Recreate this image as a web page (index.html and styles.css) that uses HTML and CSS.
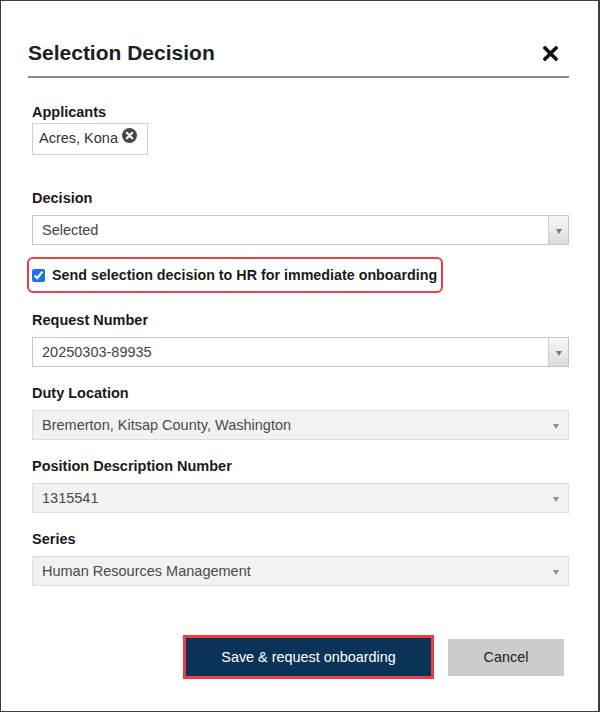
FILE: index.html
```html
<!DOCTYPE html>
<html lang="en">
<head>
<meta charset="utf-8">
<title>Selection Decision</title>
<link rel="stylesheet" href="styles.css">
</head>
<body>
<div class="modal">
  <div class="header">
    <h1 class="title">Selection Decision</h1>
    <button class="close" type="button" aria-label="Close">
      <svg width="15" height="15" viewBox="0 0 15 15"><path d="M2 2 L13 13 M13 2 L2 13" stroke="#111" stroke-width="3.6" stroke-linecap="square" fill="none"/></svg>
    </button>
  </div>
  <div class="body">
    <div class="field field-applicants">
      <div class="label label-tight">Applicants</div>
      <div class="chip">
        <span class="chip-text">Acres, Kona</span>
        <svg class="chip-x" width="15" height="15" viewBox="0 0 15 15"><circle cx="7.5" cy="7.5" r="7.5" fill="#474747"/><path d="M4.8 4.8 L10.2 10.2 M10.2 4.8 L4.8 10.2" stroke="#fff" stroke-width="2.2" stroke-linecap="round"/></svg>
      </div>
    </div>
    <div class="field field-decision">
      <div class="label">Decision</div>
      <div class="select">
        <span class="value">Selected</span>
        <span class="arrow"><i class="tri"></i></span>
      </div>
    </div>
    <label class="check">
      <input type="checkbox" class="check-box" checked>
      <span class="check-text">Send selection decision to HR for immediate onboarding</span>
    </label>
    <div class="field field-request">
      <div class="label">Request Number</div>
      <div class="select">
        <span class="value">20250303-89935</span>
        <span class="arrow"><i class="tri"></i></span>
      </div>
    </div>
    <div class="field">
      <div class="label">Duty Location</div>
      <div class="select select-disabled">
        <span class="value">Bremerton, Kitsap County, Washington</span>
        <span class="arrow"><i class="tri"></i></span>
      </div>
    </div>
    <div class="field">
      <div class="label">Position Description Number</div>
      <div class="select select-disabled">
        <span class="value">1315541</span>
        <span class="arrow"><i class="tri"></i></span>
      </div>
    </div>
    <div class="field">
      <div class="label">Series</div>
      <div class="select select-disabled">
        <span class="value">Human Resources Management</span>
        <span class="arrow"><i class="tri"></i></span>
      </div>
    </div>
    <div class="actions">
      <button class="btn btn-primary" type="button">Save &amp; request onboarding</button>
      <button class="btn btn-cancel" type="button">Cancel</button>
    </div>
  </div>
</div>
</body>
</html>
```
FILE: styles.css
```css
* { box-sizing: border-box; }
html, body { margin: 0; padding: 0; background: #fff; }
body {
  font-family: "Liberation Sans", Arial, Helvetica, sans-serif;
  color: #1c1c1c;
}
.modal {
  width: 600px;
  height: 712px;
  border: 1px solid #3d3d3d;
  border-right-width: 2px;
  background: #fff;
}
.header {
  display: flex;
  justify-content: space-between;
  align-items: flex-start;
  margin: 0 29px 0 27px;
  padding-top: 40px;
  padding-bottom: 11px;
  border-bottom: 2px solid #8c8c8c;
}
.title {
  margin: 0;
  font-size: 21px;
  line-height: 24px;
  font-weight: bold;
  color: #1e1e1e;
}
.close {
  border: 0;
  background: none;
  padding: 0;
  margin: 5px 11px 0 0;
  width: 15px;
  height: 15px;
  display: block;
  cursor: pointer;
}
.close svg { display: block; }
.body {
  padding: 0 29px 0 31px;
}
.field { margin-top: 18px; }
.field-applicants { margin-top: 26px; }
.field-decision { margin-top: 35px; }
.field-request { margin-top: 19px; }
.label {
  font-size: 14.5px;
  line-height: 17px;
  font-weight: bold;
  color: #1a1a1a;
  margin-bottom: 8px;
}
.label-tight { margin-bottom: 2px; }
.chip {
  display: inline-flex;
  align-items: flex-start;
  height: 32px;
  border: 1px solid #cfcfcf;
  padding: 6px 10px 0 6px;
  background: #fff;
}
.chip-text {
  font-size: 14.5px;
  line-height: 17px;
  color: #333;
}
.chip-x {
  display: block;
  margin: -2px 0 0 4px;
}
.select {
  display: flex;
  height: 30px;
  border: 1px solid #c6c6c6;
  background: #fff;
}
.select .value {
  flex: 1;
  padding-left: 9px;
  font-size: 14.5px;
  line-height: 28px;
  color: #444;
}
.select .arrow {
  width: 20px;
  border-left: 1px solid #cdcdcd;
  background: linear-gradient(#f8f8f8, #dcdcdc);
  display: flex;
  align-items: center;
  justify-content: center;
  padding-top: 3px;
}
.tri {
  display: block;
  width: 0;
  height: 0;
  border-left: 3px solid transparent;
  border-right: 3px solid transparent;
  border-top: 5px solid #7a7a7a;
}
.select-disabled {
  background: #f2f2f2;
  border-color: #dedede;
}
.select-disabled .value { color: #4a4a4a; }
.select-disabled .arrow {
  width: 25px;
  border-left: 0;
  background: none;
}
.select-disabled .tri { border-top-color: #8c8c8c; }
.check {
  display: flex;
  align-items: center;
  width: fit-content;
  margin: 12px 0 0 -5px;
  padding: 8px 4px 7px 3px;
  border: 2px solid #ef3b43;
  border-radius: 6px;
  cursor: pointer;
}
.check-box {
  margin: 0 7px 0 0;
  width: 13px;
  height: 13px;
  accent-color: #1a73e8;
}
.check-text {
  font-size: 14.3px;
  line-height: 17px;
  font-weight: bold;
  color: #1a1a1a;
}
.actions {
  display: flex;
  justify-content: flex-end;
  align-items: center;
  gap: 14px;
  margin: 49px 5px 0 0;
}
.btn {
  font-family: "Liberation Sans", Arial, Helvetica, sans-serif;
  font-size: 14.4px;
  cursor: pointer;
}
.btn-primary {
  width: 251px;
  height: 44px;
  border: 3px solid #ef3b43;
  background: #0b3257;
  color: #fff;
}
.btn-cancel {
  width: 116px;
  height: 37px;
  border: 0;
  background: #cccccc;
  color: #222;
}
```
